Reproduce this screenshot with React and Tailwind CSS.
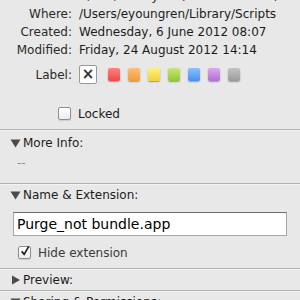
import React from "react";

const colors = [
  "from-[#ff8080] to-[#e94848]",
  "from-[#ffc074] to-[#f09a3c]",
  "from-[#fff07a] to-[#ecd43a]",
  "from-[#c8e870] to-[#94c634]",
  "from-[#8cc0ff] to-[#4a8ef0]",
  "from-[#dca8f0] to-[#b070d4]",
  "from-[#c4c4c4] to-[#9a9a9a]",
];

function Row({ label, value }) {
  return (
    <div className="flex h-[18px] items-center leading-[18px]">
      <div className="w-[72px] shrink-0 text-right text-[#2a2a2a]">{label}</div>
      <div className="ml-[7px] whitespace-nowrap text-[#1c1c1c]">{value}</div>
    </div>
  );
}

function Triangle({ open }) {
  return (
    <svg width="11" height="10" viewBox="0 0 11 10" className="shrink-0">
      {open ? (
        <path d="M0.5 1.5 L10.5 1.5 L5.5 9.5 Z" fill="#4a4a4a" />
      ) : (
        <path d="M2 0.5 L10 5 L2 9.5 Z" fill="#4a4a4a" />
      )}
    </svg>
  );
}

function Header({ open, title }) {
  return (
    <div className="flex h-[21px] items-center gap-[2px] pl-[10px] text-[#1c1c1c]">
      <Triangle open={open} />
      <span className="leading-none">{title}</span>
    </div>
  );
}

function Sep() {
  return <div className="h-px w-full bg-[#b2b2b2] shadow-[0_1px_0_#f4f4f4]" />;
}

function Checkbox({ checked }) {
  return (
    <div className="flex h-[13px] w-[13px] items-center justify-center rounded-[2px] border border-[#8e8e8e] bg-gradient-to-b from-white to-[#ececec] shadow-[0_1px_1px_rgba(0,0,0,0.12)]">
      {checked && (
        <svg width="12" height="12" viewBox="0 0 12 12" className="-mt-[3px] ml-[1px]">
          <path d="M2 6.5 L5 10 L10.5 0.5" stroke="#1e1e1e" strokeWidth="2" fill="none" />
        </svg>
      )}
    </div>
  );
}

export default function App() {
  return (
    <div
      className="h-[300px] w-[300px] overflow-hidden bg-[#e8e8e8] text-[12px]"
      style={{ fontFamily: '"DejaVu Sans", "Liberation Sans", sans-serif' }}
    >
      <div className="-mt-[13px]">
        <Row label="Size:" value="1,052,699 bytes (1.1 MB on disk)" />
        <Row label="Where:" value="/Users/eyoungren/Library/Scripts" />
        <Row label="Created:" value="Wednesday, 6 June 2012 08:07" />
        <Row label="Modified:" value="Friday, 24 August 2012 14:14" />
      </div>

      <div className="mt-[6px] flex h-[19px] items-center">
        <div className="w-[72px] shrink-0 text-right text-[#2a2a2a]">Label:</div>
        <div className="ml-[7px] flex h-[19px] w-[18px] items-center justify-center rounded-[2px] border border-[#9a9a9a] bg-white text-[15px] font-bold leading-none text-[#333]">
          ×
        </div>
        <div className="ml-[11px] flex gap-[8px]">
          {colors.map((c) => (
            <div
              key={c}
              className={`h-[13px] w-[12px] rounded-[2px] bg-gradient-to-b ${c} shadow-[0_1px_1.5px_rgba(0,0,0,0.35)]`}
            />
          ))}
        </div>
      </div>

      <div className="ml-[58px] mt-[23px] flex h-[13px] items-center gap-[7px]">
        <Checkbox />
        <span className="text-[#1c1c1c]">Locked</span>
      </div>

      <div className="mt-[9px]">
        <Sep />
      </div>
      <div className="mt-[2px]">
        <Header open title="More Info:" />
      </div>
      <div className="mt-[1px] flex h-[18px] items-center pl-[17px] text-[#8a8a8a]">--</div>
      <div className="mt-[11px]">
        <Sep />
      </div>
      <Header open title="Name & Extension:" />

      <div className="mx-[13px] mt-[7px] flex h-[24px] items-center border border-[#a6a6a6] border-t-[#6e6e6e] bg-white pl-[3px] text-[14px] text-black">
        Purge_not bundle.app
      </div>

      <div className="ml-[18px] mt-[10px] flex h-[13px] items-center gap-[7px]">
        <Checkbox checked />
        <span className="text-[#3a3a3a]">Hide extension</span>
      </div>

      <div className="mt-[9px]">
        <Sep />
      </div>
      <Header title="Preview:" />
      <Sep />
      <Header open title="Sharing & Permissions:" />
    </div>
  );
}
